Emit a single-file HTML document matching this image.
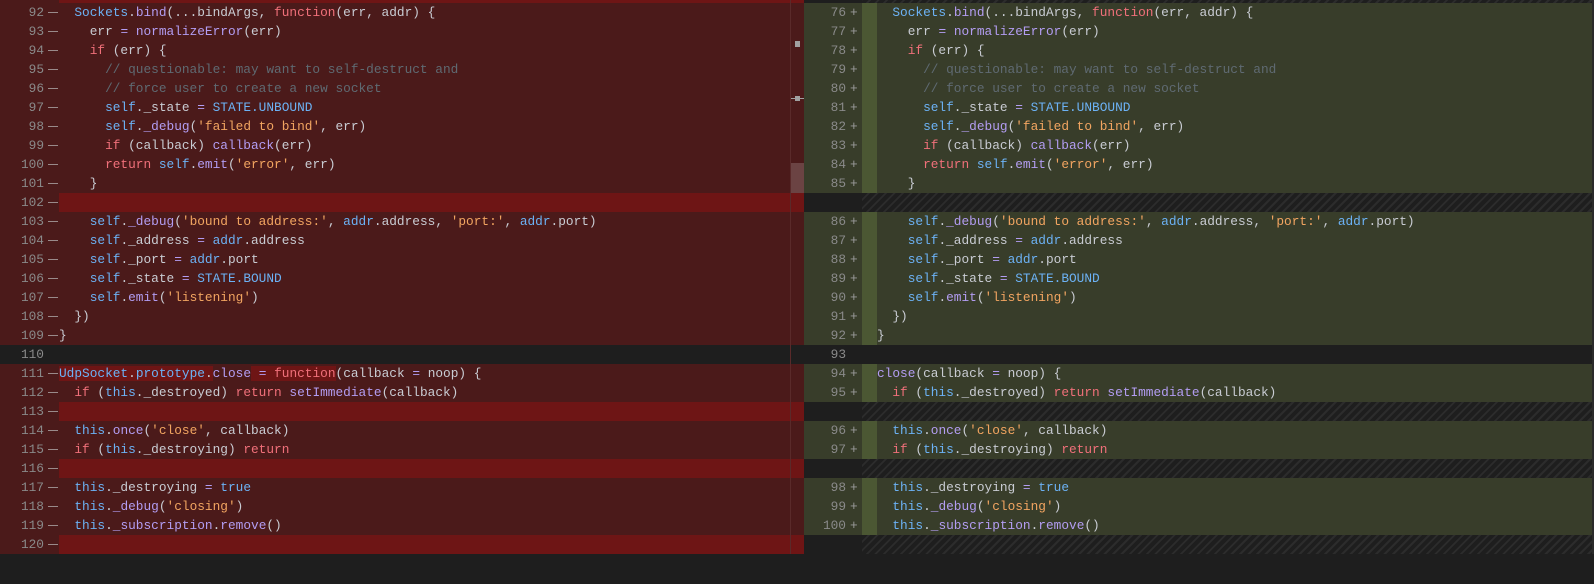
<!DOCTYPE html>
<html><head><meta charset="utf-8"><style>
*{margin:0;padding:0;box-sizing:border-box}
body{width:1594px;height:554px;overflow:hidden;background:#1e1e1e;font-family:"Liberation Mono",monospace;font-size:12.8px;color:#c9ccd3;position:relative}
.pane{position:absolute;top:-16px;height:600px;overflow:hidden}
#L{left:0;width:804px}
#R{left:804px;width:790px}
.row{position:relative;height:19px;line-height:19px;white-space:pre}
.n{position:absolute;top:0;text-align:right;color:#8a8a8a}
#L .n{left:0;width:44px}
#R .n{left:0;width:42px}
#L .m{position:absolute;left:48px;top:9px;width:10px;height:1px;background:#9a8a8a}
#R .m{position:absolute;left:46px;top:0;width:10px;color:#9a9a9a}
#L .c{position:absolute;left:59px;top:0}
#R .c{position:absolute;left:73px;top:0}
#L .row{background:#4b1a1a}
#L .row.full .c{right:0;height:19px;background:#6e1515}
#L .row.same{background:#1e1e1e}
#R .row{background:#383d2a}
#R .row .g{position:absolute;left:58px;top:0;width:15px;height:19px;background:#4b5733}
#R .row.same{background:#1e1e1e}
#R .row.h{background:#1e1e1e}
#R .row.h .hh{position:absolute;left:58px;right:0;top:0;height:19px;background:repeating-linear-gradient(135deg,#1e1e1e 0 4px,#2c2c2c 4px 6px)}
.k{color:#f0707a}.b{color:#6cb2f5}.f{color:#b39df2}.s{color:#f2a561}.cm{color:#5f6a72}.o{color:#b39df2}
.hl{background:#6e1515}
#sb{position:absolute;left:790px;top:0;width:14px;height:554px;border-left:1px solid #5a2a2a}
</style></head><body>
<div id="L" class="pane">
<div class="row full"><span class="n">91</span><span class="m"></span><span class="c"></span></div>
<div class="row"><span class="n">92</span><span class="m"></span><span class="c">  <span class="b">Sockets</span>.<span class="f">bind</span>(...bindArgs, <span class="k">function</span>(err, addr) {</span></div>
<div class="row"><span class="n">93</span><span class="m"></span><span class="c">    err <span class="o">=</span> <span class="f">normalizeError</span>(err)</span></div>
<div class="row"><span class="n">94</span><span class="m"></span><span class="c">    <span class="k">if</span> (err) {</span></div>
<div class="row"><span class="n">95</span><span class="m"></span><span class="c">      <span class="cm">// questionable: may want to self-destruct and</span></span></div>
<div class="row"><span class="n">96</span><span class="m"></span><span class="c">      <span class="cm">// force user to create a new socket</span></span></div>
<div class="row"><span class="n">97</span><span class="m"></span><span class="c">      <span class="b">self</span>._state <span class="o">=</span> <span class="b">STATE.UNBOUND</span></span></div>
<div class="row"><span class="n">98</span><span class="m"></span><span class="c">      <span class="b">self</span>.<span class="f">_debug</span>(<span class="s">'failed to bind'</span>, err)</span></div>
<div class="row"><span class="n">99</span><span class="m"></span><span class="c">      <span class="k">if</span> (callback) <span class="f">callback</span>(err)</span></div>
<div class="row"><span class="n">100</span><span class="m"></span><span class="c">      <span class="k">return</span> <span class="b">self</span>.<span class="f">emit</span>(<span class="s">'error'</span>, err)</span></div>
<div class="row"><span class="n">101</span><span class="m"></span><span class="c">    }</span></div>
<div class="row full"><span class="n">102</span><span class="m"></span><span class="c"></span></div>
<div class="row"><span class="n">103</span><span class="m"></span><span class="c">    <span class="b">self</span>.<span class="f">_debug</span>(<span class="s">'bound to address:'</span>, <span class="b">addr</span>.address, <span class="s">'port:'</span>, <span class="b">addr</span>.port)</span></div>
<div class="row"><span class="n">104</span><span class="m"></span><span class="c">    <span class="b">self</span>._address <span class="o">=</span> <span class="b">addr</span>.address</span></div>
<div class="row"><span class="n">105</span><span class="m"></span><span class="c">    <span class="b">self</span>._port <span class="o">=</span> <span class="b">addr</span>.port</span></div>
<div class="row"><span class="n">106</span><span class="m"></span><span class="c">    <span class="b">self</span>._state <span class="o">=</span> <span class="b">STATE.BOUND</span></span></div>
<div class="row"><span class="n">107</span><span class="m"></span><span class="c">    <span class="b">self</span>.<span class="f">emit</span>(<span class="s">'listening'</span>)</span></div>
<div class="row"><span class="n">108</span><span class="m"></span><span class="c">  })</span></div>
<div class="row"><span class="n">109</span><span class="m"></span><span class="c">}</span></div>
<div class="row same"><span class="n">110</span><span class="c"></span></div>
<div class="row"><span class="n">111</span><span class="m"></span><span class="c"><span class="hl"><span class="b">UdpSocket</span>.<span class="b">prototype</span>.</span><span class="f">close</span><span class="hl"> <span class="o">=</span> <span class="k">function</span></span>(callback <span class="o">=</span> noop) {</span></div>
<div class="row"><span class="n">112</span><span class="m"></span><span class="c">  <span class="k">if</span> (<span class="b">this</span>._destroyed) <span class="k">return</span> <span class="f">setImmediate</span>(callback)</span></div>
<div class="row full"><span class="n">113</span><span class="m"></span><span class="c"></span></div>
<div class="row"><span class="n">114</span><span class="m"></span><span class="c">  <span class="b">this</span>.<span class="f">once</span>(<span class="s">'close'</span>, callback)</span></div>
<div class="row"><span class="n">115</span><span class="m"></span><span class="c">  <span class="k">if</span> (<span class="b">this</span>._destroying) <span class="k">return</span></span></div>
<div class="row full"><span class="n">116</span><span class="m"></span><span class="c"></span></div>
<div class="row"><span class="n">117</span><span class="m"></span><span class="c">  <span class="b">this</span>._destroying <span class="o">=</span> <span class="b">true</span></span></div>
<div class="row"><span class="n">118</span><span class="m"></span><span class="c">  <span class="b">this</span>.<span class="f">_debug</span>(<span class="s">'closing'</span>)</span></div>
<div class="row"><span class="n">119</span><span class="m"></span><span class="c">  <span class="b">this</span>.<span class="f">_subscription</span>.<span class="f">remove</span>()</span></div>
<div class="row full"><span class="n">120</span><span class="m"></span><span class="c"></span></div>
</div>
<div id="sb">
<div style="position:absolute;left:4px;top:41px;width:5px;height:6px;background:#a0a0a0"></div>
<div style="position:absolute;left:0;top:98px;width:14px;height:1px;background:#a0a0a0"></div>
<div style="position:absolute;left:4px;top:96px;width:5px;height:5px;background:#a0a0a0"></div>
<div style="position:absolute;left:0;top:163px;width:14px;height:30px;background:rgba(255,255,255,0.18)"></div>
</div>
<div id="R" class="pane">
<div class="row h"><span class="hh"></span></div>
<div class="row"><span class="n">76</span><span class="m">+</span><span class="g"></span><span class="c">  <span class="b">Sockets</span>.<span class="f">bind</span>(...bindArgs, <span class="k">function</span>(err, addr) {</span></div>
<div class="row"><span class="n">77</span><span class="m">+</span><span class="g"></span><span class="c">    err <span class="o">=</span> <span class="f">normalizeError</span>(err)</span></div>
<div class="row"><span class="n">78</span><span class="m">+</span><span class="g"></span><span class="c">    <span class="k">if</span> (err) {</span></div>
<div class="row"><span class="n">79</span><span class="m">+</span><span class="g"></span><span class="c">      <span class="cm">// questionable: may want to self-destruct and</span></span></div>
<div class="row"><span class="n">80</span><span class="m">+</span><span class="g"></span><span class="c">      <span class="cm">// force user to create a new socket</span></span></div>
<div class="row"><span class="n">81</span><span class="m">+</span><span class="g"></span><span class="c">      <span class="b">self</span>._state <span class="o">=</span> <span class="b">STATE.UNBOUND</span></span></div>
<div class="row"><span class="n">82</span><span class="m">+</span><span class="g"></span><span class="c">      <span class="b">self</span>.<span class="f">_debug</span>(<span class="s">'failed to bind'</span>, err)</span></div>
<div class="row"><span class="n">83</span><span class="m">+</span><span class="g"></span><span class="c">      <span class="k">if</span> (callback) <span class="f">callback</span>(err)</span></div>
<div class="row"><span class="n">84</span><span class="m">+</span><span class="g"></span><span class="c">      <span class="k">return</span> <span class="b">self</span>.<span class="f">emit</span>(<span class="s">'error'</span>, err)</span></div>
<div class="row"><span class="n">85</span><span class="m">+</span><span class="g"></span><span class="c">    }</span></div>
<div class="row h"><span class="hh"></span></div>
<div class="row"><span class="n">86</span><span class="m">+</span><span class="g"></span><span class="c">    <span class="b">self</span>.<span class="f">_debug</span>(<span class="s">'bound to address:'</span>, <span class="b">addr</span>.address, <span class="s">'port:'</span>, <span class="b">addr</span>.port)</span></div>
<div class="row"><span class="n">87</span><span class="m">+</span><span class="g"></span><span class="c">    <span class="b">self</span>._address <span class="o">=</span> <span class="b">addr</span>.address</span></div>
<div class="row"><span class="n">88</span><span class="m">+</span><span class="g"></span><span class="c">    <span class="b">self</span>._port <span class="o">=</span> <span class="b">addr</span>.port</span></div>
<div class="row"><span class="n">89</span><span class="m">+</span><span class="g"></span><span class="c">    <span class="b">self</span>._state <span class="o">=</span> <span class="b">STATE.BOUND</span></span></div>
<div class="row"><span class="n">90</span><span class="m">+</span><span class="g"></span><span class="c">    <span class="b">self</span>.<span class="f">emit</span>(<span class="s">'listening'</span>)</span></div>
<div class="row"><span class="n">91</span><span class="m">+</span><span class="g"></span><span class="c">  })</span></div>
<div class="row"><span class="n">92</span><span class="m">+</span><span class="g"></span><span class="c">}</span></div>
<div class="row same"><span class="n">93</span><span class="c"></span></div>
<div class="row"><span class="n">94</span><span class="m">+</span><span class="g"></span><span class="c"><span class="f">close</span>(callback <span class="o">=</span> noop) {</span></div>
<div class="row"><span class="n">95</span><span class="m">+</span><span class="g"></span><span class="c">  <span class="k">if</span> (<span class="b">this</span>._destroyed) <span class="k">return</span> <span class="f">setImmediate</span>(callback)</span></div>
<div class="row h"><span class="hh"></span></div>
<div class="row"><span class="n">96</span><span class="m">+</span><span class="g"></span><span class="c">  <span class="b">this</span>.<span class="f">once</span>(<span class="s">'close'</span>, callback)</span></div>
<div class="row"><span class="n">97</span><span class="m">+</span><span class="g"></span><span class="c">  <span class="k">if</span> (<span class="b">this</span>._destroying) <span class="k">return</span></span></div>
<div class="row h"><span class="hh"></span></div>
<div class="row"><span class="n">98</span><span class="m">+</span><span class="g"></span><span class="c">  <span class="b">this</span>._destroying <span class="o">=</span> <span class="b">true</span></span></div>
<div class="row"><span class="n">99</span><span class="m">+</span><span class="g"></span><span class="c">  <span class="b">this</span>.<span class="f">_debug</span>(<span class="s">'closing'</span>)</span></div>
<div class="row"><span class="n">100</span><span class="m">+</span><span class="g"></span><span class="c">  <span class="b">this</span>.<span class="f">_subscription</span>.<span class="f">remove</span>()</span></div>
<div class="row h"><span class="hh"></span></div>
</div>
<div style="position:absolute;left:1592px;top:0;width:2px;height:554px;background:#2a2a2a"></div>
</body></html>
